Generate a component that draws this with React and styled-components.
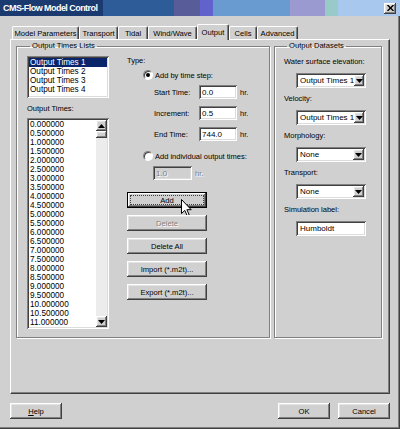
import React from 'react';
import styled, { createGlobalStyle, css } from 'styled-components';

const GRAY = '#d0d0d0';

const Global = createGlobalStyle`
  html, body { margin: 0; padding: 0; background: ${GRAY}; }
  body {
    font-family: "Liberation Sans", Arial, sans-serif;
    font-size: 7.5px;
    color: #000;
  }
  * { box-sizing: border-box; }
`;

const raised = css`
  background: ${GRAY};
  box-shadow: inset -1px -1px #404040, inset 1px 1px #fff,
    inset -2px -2px #808080, inset 2px 2px #e4e4e4;
`;

const sunken = css`
  box-shadow: inset 1px 1px #808080, inset -1px -1px #fff,
    inset 2px 2px #404040, inset -2px -2px #dcdcdc;
`;

const Window = styled.div`
  width: 400px;
  height: 429px;
  background: ${GRAY};
  display: flex;
  flex-direction: column;
  box-shadow: inset -1px -1px #404040, inset -2px -2px #808080;
`;

const TitleBar = styled.div`
  height: 16px;
  display: flex;
  align-items: center;
  padding: 0 4px 0 3px;
  background: linear-gradient(
    to right,
    #1b3a70 0 103px,
    #2d5c98 103px 174px,
    #585c98 174px 200px,
    #6262cc 200px 213px,
    #6a9bd0 213px 290px,
    #9a9ad0 290px 325px,
    #98caca 325px 338px,
    #a8c8ee 338px
  );
`;

const Title = styled.span`
  color: #fff;
  font-weight: bold;
  font-size: 9px;
  letter-spacing: -0.55px;
`;

const CloseBtn = styled.div`
  ${raised};
  margin-left: auto;
  width: 12px;
  height: 11px;
  display: flex;
  align-items: center;
  justify-content: center;
`;

const Body = styled.div`
  flex: 1;
  display: flex;
  flex-direction: column;
  padding: 8px 10px 0 10px;
`;

const TabStrip = styled.div`
  display: flex;
  align-items: flex-end;
  height: 15px;
  padding-left: 2px;
  position: relative;
  z-index: 1;
`;

const Tab = styled.div`
  width: ${p => p.$w}px;
  height: ${p => (p.$active ? 16 : 13)}px;
  margin-bottom: ${p => (p.$active ? -1 : 0)}px;
  background: ${GRAY};
  border-top: 1px solid #fff;
  border-left: 1px solid #fff;
  border-right: 1px solid #404040;
  border-radius: 2px 2px 0 0;
  box-shadow: inset -1px 0 #808080;
  display: flex;
  align-items: ${p => (p.$active ? 'flex-start' : 'center')};
  padding-top: ${p => (p.$active ? 3 : 1)}px;
  justify-content: center;
  font-size: 7.6px;
  white-space: nowrap;
`;

const Panel = styled.div`
  height: 355px;
  border-top: 1px solid #fff;
  border-left: 1px solid #fff;
  border-right: 1px solid #404040;
  border-bottom: 1px solid #404040;
  box-shadow: inset -1px -1px #808080;
  padding: 1px 0 0 5px;
  display: flex;
  gap: 4px;
`;

const Group = styled.fieldset`
  margin: 0;
  min-width: 0;
  width: ${p => p.$w}px;
  height: 297px;
  padding: ${p => p.$pt}px 8px 0 ${p => p.$pl}px;
  border: 1px solid #808080;
  box-shadow: inset 1px 1px #fff, 1px 1px #fff;
`;

const Legend = styled.legend`
  padding: 0 2px;
  margin-left: 3px;
  line-height: 10px;
  font-size: 7.6px;
`;

const Columns = styled.div`
  display: flex;
  gap: 18px;
`;

const LeftCol = styled.div`
  width: 82px;
  display: flex;
  flex-direction: column;
`;

const ListBox = styled.div`
  height: ${p => p.$h}px;
  background: #fff;
  ${sunken};
  padding: 2px;
  display: flex;
  overflow: hidden;
`;

const Items = styled.div`
  flex: 1;
  overflow: hidden;
`;

const Item = styled.div`
  line-height: 9px;
  height: 9px;
  font-size: 8.2px;
  padding-left: 1px;
  white-space: nowrap;
  background: ${p => (p.$sel ? '#0a246a' : 'transparent')};
  color: ${p => (p.$sel ? '#fff' : '#000')};
`;

const ListLabel = styled.div`
  line-height: 10px;
  margin: 6px 0 4px;
`;

const ScrollBar = styled.div`
  width: 11px;
  display: flex;
  flex-direction: column;
  background: #ececec;
`;

const ScrollBtn = styled.div`
  ${raised};
  height: 11px;
  display: flex;
  align-items: center;
  justify-content: center;
`;

const Thumb = styled.div`
  ${raised};
  height: 7px;
`;

const Track = styled.div`
  flex: 1;
`;

const CenterCol = styled.div`
  width: 125px;
  display: flex;
  flex-direction: column;
`;

const Label = styled.div`
  line-height: 10px;
  height: 10px;
  margin-top: ${p => p.$mt || 0}px;
`;

const RadioRow = styled.div`
  display: flex;
  align-items: center;
  gap: 2px;
  height: 10px;
  padding-left: 16px;
  margin-top: ${p => p.$mt}px;
`;

const RadioCircle = styled.div`
  width: 10px;
  height: 10px;
  border-radius: 50%;
  background: #fff;
  border: 1px solid;
  border-color: #808080 #fff #fff #808080;
  box-shadow: inset 1px 1px #404040;
  display: flex;
  align-items: center;
  justify-content: center;
  &::after {
    content: '';
    width: 4px;
    height: 4px;
    border-radius: 50%;
    background: ${p => (p.$on ? '#000' : 'transparent')};
  }
`;

const FieldRow = styled.div`
  display: flex;
  align-items: center;
  height: 14px;
  padding-left: ${p => p.$indent}px;
  margin-top: ${p => p.$mt}px;
`;

const FieldLabel = styled.span`
  width: 45px;
`;

const TextBox = styled.div`
  width: ${p => p.$w}px;
  height: ${p => p.$h || 14}px;
  background: ${p => (p.$disabled ? GRAY : '#fff')};
  ${sunken};
  padding: 0 3px;
  font-size: 8px;
  display: flex;
  align-items: center;
  color: ${p => (p.$disabled ? '#808080' : '#000')};
  text-shadow: ${p => (p.$disabled ? '1px 1px #fff' : 'none')};
`;

const Unit = styled.span`
  margin-left: 3px;
  color: ${p => (p.$disabled ? '#808080' : '#000')};
  text-shadow: ${p => (p.$disabled ? '1px 1px #fff' : 'none')};
`;

const Buttons = styled.div`
  display: flex;
  flex-direction: column;
  gap: 7px;
  margin-top: 12px;
`;

const Button = styled.div`
  position: relative;
  width: ${p => p.$w || 80}px;
  height: 16px;
  ${raised};
  display: flex;
  align-items: center;
  justify-content: center;
  font-size: 7.6px;
  color: ${p => (p.$disabled ? '#808080' : '#000')};
  text-shadow: ${p => (p.$disabled ? '1px 1px #fff' : 'none')};
  ${p =>
    p.$default &&
    css`
      box-shadow: inset 0 0 0 1px #000, inset -2px -2px #404040,
        inset 2px 2px #fff, inset -3px -3px #808080;
      &::before {
        content: '';
        position: absolute;
        inset: 3px;
        border: 1px dotted #404040;
      }
    `}
  u { text-decoration: underline; }
`;

const Cursor = styled.svg`
  position: absolute;
  left: 54px;
  top: 7px;
`;

const DSBlock = styled.div`
  margin-bottom: 6px;
`;

const SelectBox = styled.div`
  width: 70px;
  height: 15px;
  margin: 6px 0 0 12px;
  background: #fff;
  ${sunken};
  padding: 2px;
  display: flex;
  align-items: center;
`;

const SelectText = styled.span`
  flex: 1;
  padding-left: 2px;
  font-size: 8px;
  white-space: nowrap;
`;

const DropBtn = styled.div`
  ${raised};
  width: 11px;
  height: 11px;
  display: flex;
  align-items: center;
  justify-content: center;
`;

const Footer = styled.div`
  display: flex;
  gap: 8px;
  margin-top: 9px;
`;

const Spacer = styled.div`
  flex: 1;
`;

const Up = () => (
  <svg width="7" height="4" viewBox="0 0 7 4"><path d="M3.5 0 L7 4 L0 4 Z" fill="#000" /></svg>
);
const Down = () => (
  <svg width="7" height="4" viewBox="0 0 7 4"><path d="M0 0 L7 0 L3.5 4 Z" fill="#000" /></svg>
);

const tabs = [
  ['Model Parameters', 67],
  ['Transport', 39],
  ['Tidal', 30],
  ['Wind/Wave', 49],
  ['Output', 32],
  ['Cells', 28],
  ['Advanced', 41],
];

const times = Array.from({ length: 24 }, (_, i) => (i * 0.5).toFixed(6));

const datasets = [
  ['Water surface elevation:', 'Output Times 1'],
  ['Velocity:', 'Output Times 1'],
  ['Morphology:', 'None'],
  ['Transport:', 'None'],
];

export default function App() {
  return (
    <>
      <Global />
      <Window>
        <TitleBar>
          <Title>CMS-Flow Model Control</Title>
          <CloseBtn>
            <svg width="7" height="6" viewBox="0 0 7 6">
              <path d="M0.5 0 L6.5 6 M6.5 0 L0.5 6" stroke="#000" strokeWidth="1.4" />
            </svg>
          </CloseBtn>
        </TitleBar>
        <Body>
          <TabStrip>
            {tabs.map(([t, w]) => (
              <Tab key={t} $w={w} $active={t === 'Output'}>{t}</Tab>
            ))}
          </TabStrip>
          <Panel>
            <Group $w={254} $pt={5} $pl={10}>
              <Legend>Output Times Lists</Legend>
              <Columns>
                <LeftCol>
                  <ListBox $h={42}>
                    <Items>
                      {[1, 2, 3, 4].map(n => (
                        <Item key={n} $sel={n === 1}>Output Times {n}</Item>
                      ))}
                    </Items>
                  </ListBox>
                  <ListLabel>Output Times:</ListLabel>
                  <ListBox $h={211}>
                    <Items>
                      {times.map(t => <Item key={t}>{t}</Item>)}
                    </Items>
                    <ScrollBar>
                      <ScrollBtn><Up /></ScrollBtn>
                      <Thumb />
                      <Track />
                      <ScrollBtn><Down /></ScrollBtn>
                    </ScrollBar>
                  </ListBox>
                </LeftCol>
                <CenterCol>
                  <Label>Type:</Label>
                  <RadioRow $mt={4}>
                    <RadioCircle $on />
                    <span>Add by time step:</span>
                  </RadioRow>
                  <FieldRow $indent={27} $mt={5}>
                    <FieldLabel>Start Time:</FieldLabel>
                    <TextBox $w={38}>0.0</TextBox>
                    <Unit>hr.</Unit>
                  </FieldRow>
                  <FieldRow $indent={27} $mt={7}>
                    <FieldLabel>Increment:</FieldLabel>
                    <TextBox $w={38}>0.5</TextBox>
                    <Unit>hr.</Unit>
                  </FieldRow>
                  <FieldRow $indent={27} $mt={7}>
                    <FieldLabel>End Time:</FieldLabel>
                    <TextBox $w={38}>744.0</TextBox>
                    <Unit>hr.</Unit>
                  </FieldRow>
                  <RadioRow $mt={10}>
                    <RadioCircle />
                    <span>Add individual output times:</span>
                  </RadioRow>
                  <FieldRow $indent={26} $mt={5}>
                    <TextBox $w={39} $disabled>1.0</TextBox>
                    <Unit $disabled>hr.</Unit>
                  </FieldRow>
                  <Buttons>
                    <Button $default>
                      Add
                      <Cursor width="11" height="18" viewBox="0 0 11 18">
                        <path
                          d="M0.5 0.5 L0.5 14.5 L3.8 11.4 L6.2 16.8 L8.2 15.9 L5.9 10.7 L10.2 10.7 Z"
                          fill="#fff"
                          stroke="#000"
                          strokeWidth="1"
                          strokeLinejoin="miter"
                        />
                      </Cursor>
                    </Button>
                    <Button $disabled>Delete</Button>
                    <Button>Delete All</Button>
                    <Button>Import (*.m2t)...</Button>
                    <Button>Export (*.m2t)...</Button>
                  </Buttons>
                </CenterCol>
              </Columns>
            </Group>
            <Group $w={108} $pt={6} $pl={9}>
              <Legend>Output Datasets</Legend>
              {datasets.map(([label, value]) => (
                <DSBlock key={label}>
                  <Label>{label}</Label>
                  <SelectBox>
                    <SelectText>{value}</SelectText>
                    <DropBtn><Down /></DropBtn>
                  </SelectBox>
                </DSBlock>
              ))}
              <DSBlock>
                <Label>Simulation label:</Label>
                <SelectBox>
                  <SelectText>Humboldt</SelectText>
                </SelectBox>
              </DSBlock>
            </Group>
          </Panel>
          <Footer>
            <Button $w={52}><span><u>H</u>elp</span></Button>
            <Spacer />
            <Button $w={52}>OK</Button>
            <Button $w={52}>Cancel</Button>
          </Footer>
        </Body>
      </Window>
    </>
  );
}
